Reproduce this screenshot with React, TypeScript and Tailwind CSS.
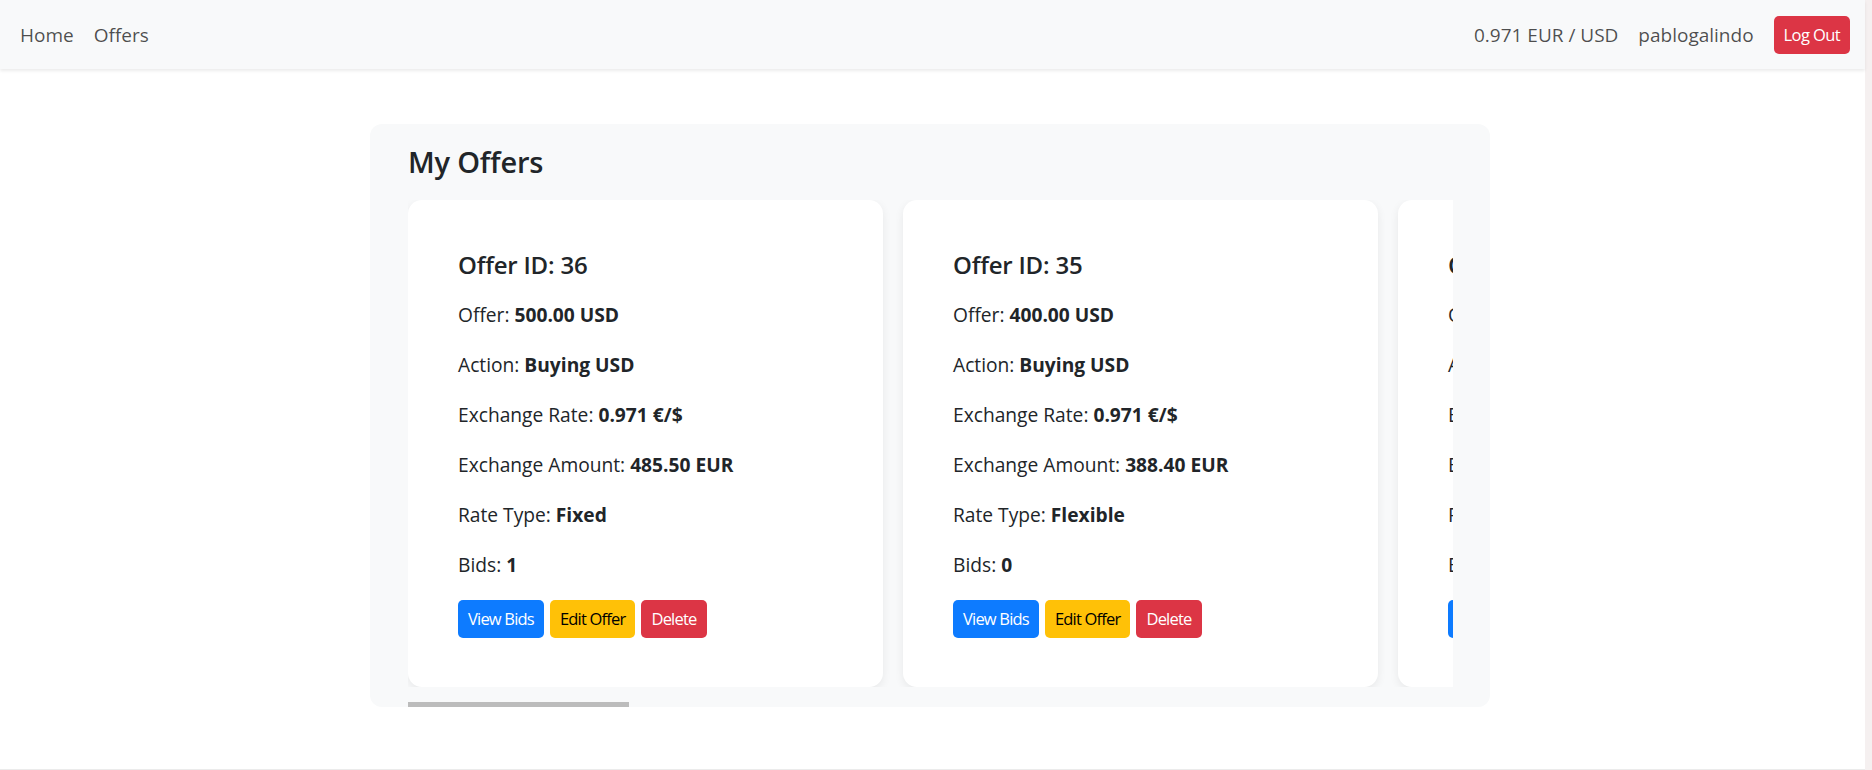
import React from "react";

interface Offer {
  id: number;
  amount: string;
  action: string;
  rate: string;
  exchangeAmount: string;
  rateType: string;
  bids: number;
}

const offers: Offer[] = [
  { id: 36, amount: "500.00 USD", action: "Buying USD", rate: "0.971 €/$", exchangeAmount: "485.50 EUR", rateType: "Fixed", bids: 1 },
  { id: 35, amount: "400.00 USD", action: "Buying USD", rate: "0.971 €/$", exchangeAmount: "388.40 EUR", rateType: "Flexible", bids: 0 },
  { id: 34, amount: "250.00 USD", action: "Selling USD", rate: "0.971 €/$", exchangeAmount: "242.75 EUR", rateType: "Fixed", bids: 2 },
];

function OfferCard({ offer }: { offer: Offer }) {
  const rows: [string, string | number][] = [
    ["Offer", offer.amount],
    ["Action", offer.action],
    ["Exchange Rate", offer.rate],
    ["Exchange Amount", offer.exchangeAmount],
    ["Rate Type", offer.rateType],
    ["Bids", offer.bids],
  ];

  return (
    <div className="w-[475px] shrink-0 bg-white rounded-[14px] shadow-[0_3px_10px_rgba(0,0,0,0.07)] px-[50px] pt-[50px] pb-[49px]">
      <h5 className="text-[24px] leading-[30px] font-semibold text-[#212529] mb-[20px] whitespace-nowrap tracking-[-0.2px]">
        Offer ID: {offer.id}
      </h5>
      {rows.map(([label, value]) => (
        <p key={label} className="text-[19.2px] leading-[30px] text-[#212529] mb-[20px] whitespace-nowrap">
          {label}: <b className="font-bold">{value}</b>
        </p>
      ))}
      <div className="flex gap-[6px]">
        <button className="h-[38px] px-[10px] rounded-[5px] bg-[#0d7bff] text-white text-[16.5px] leading-[26px] tracking-[-0.8px]">
          View Bids
        </button>
        <button className="h-[38px] px-[10px] rounded-[5px] bg-[#ffc107] text-black text-[16.5px] leading-[26px] tracking-[-0.8px]">
          Edit Offer
        </button>
        <button className="h-[38px] px-[10px] rounded-[5px] bg-[#dc3545] text-white text-[16.5px] leading-[26px] tracking-[-0.8px]">
          Delete
        </button>
      </div>
    </div>
  );
}

export default function App() {
  return (
    <div
      className="flex h-[770px] w-[1872px] bg-white text-[#212529]"
      style={{ fontFamily: '"Segoe UI", "Open Sans", "Noto Sans", sans-serif' }}
    >
      <div className="flex flex-col w-[1865px]">
        {/* navbar */}
        <nav className="h-[69px] shrink-0 flex items-center justify-between bg-[#f8f9fa] shadow-[0_2px_3px_rgba(0,0,0,0.08)] pl-[10px] pr-[15px] relative z-10">
          <div className="flex items-center text-[19px] leading-[30px] text-black/70">
            <a className="px-[10px]">Home</a>
            <a className="px-[10px]">Offers</a>
          </div>
          <div className="flex items-center gap-[20px] text-[19px] leading-[30px] text-black/70">
            <span>0.971 EUR / USD</span>
            <span>pablogalindo</span>
            <button className="h-[38px] px-[10px] rounded-[5px] bg-[#dc3545] text-white text-[16.5px] leading-[26px] tracking-[-0.6px]">
              Log Out
            </button>
          </div>
        </nav>

        {/* content */}
        <main className="flex-1 pt-[55px]">
          <section className="ml-[370px] w-[1120px] bg-[#f8f9fa] rounded-[12px] pt-[20px] pl-[38px] pr-[37px] overflow-hidden">
            <h4 className="text-[29px] leading-[36px] font-semibold mb-[20px] tracking-[-0.2px]">My Offers</h4>
            <div className="overflow-hidden">
              <div className="flex gap-[20px]">
                {offers.map((o) => (
                  <OfferCard key={o.id} offer={o} />
                ))}
              </div>
            </div>
            <div className="h-[20px] flex items-end">
              <div className="h-[5px] w-[221px] bg-[#bcbcbc]" />
            </div>
          </section>
        </main>
        <div className="h-[1px] bg-[#ebebeb]" />
      </div>
      <div className="w-[7px] bg-[#f5f0f0]" />
    </div>
  );
}
